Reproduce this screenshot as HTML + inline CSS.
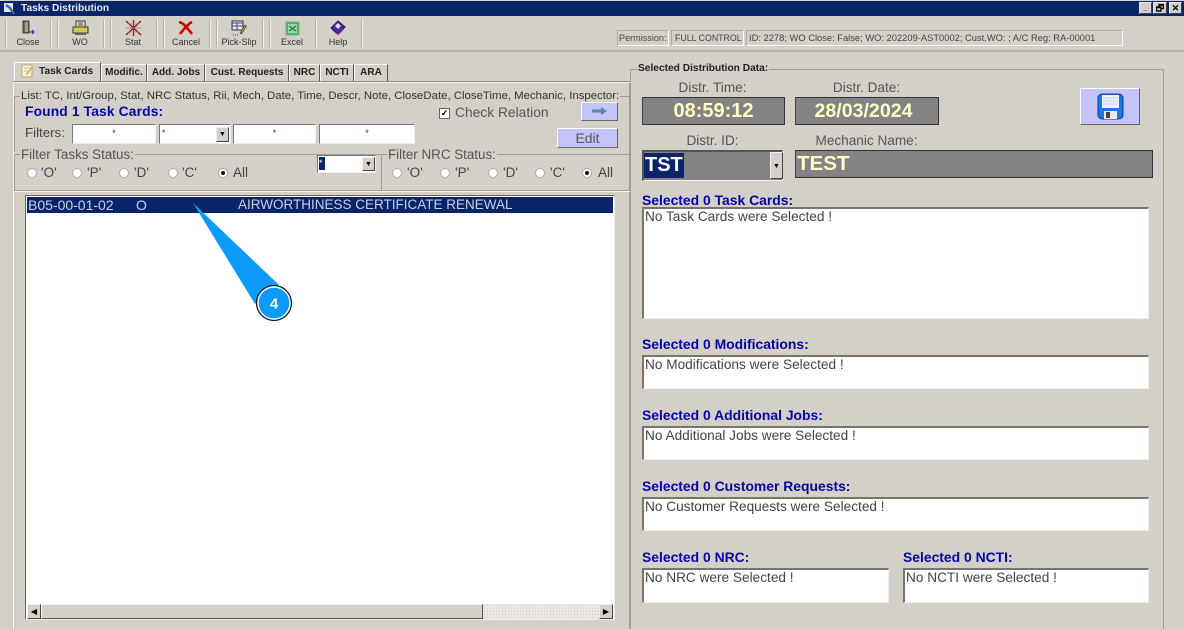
<!DOCTYPE html>
<html><head><meta charset="utf-8"><style>
html,body{margin:0;padding:0;width:1184px;height:629px;overflow:hidden;background:#d4d0c8}
body{position:relative;font-family:"Liberation Sans",sans-serif;color:#333}
div,span,svg{position:absolute;box-sizing:border-box}
.t{white-space:nowrap;line-height:14px}
.tb{font-size:9px;color:#333;text-align:center;top:36px;line-height:12px}
.sep{top:19px;width:2px;height:29px;border-left:1px solid #b5b2ab;border-right:1px solid #f2f0ec}
.tab{top:64px;height:17px;background:#d4d0c8;border-top:1px solid #fff;border-left:1px solid #fff;border-right:1px solid #555;font:bold 10px/16px "Liberation Sans",sans-serif;color:#222;text-align:center;white-space:nowrap}
.grp{border:1px solid #a09d96}
.lbl{background:#d4d0c8;padding:0 1px;white-space:nowrap;line-height:14px}
.in{background:#fff;border:1px solid #777;border-right-color:#eee;border-bottom-color:#eee}
.r{width:10px;height:10px;border-radius:50%;background:#fff;border:1px solid #aaa}
.r.on:after{content:"";position:absolute;left:2px;top:2px;width:4px;height:4px;border-radius:50%;background:#111}
.rt{font-size:13.5px;color:#444;line-height:14px;white-space:nowrap}
.blue{font:bold 13.9px/15px "Liberation Sans",sans-serif;color:#0505a8;white-space:nowrap}
.box{background:#fff;border:2px solid #77746f;border-right:1px solid #eee;border-bottom:1px solid #eee;font-size:13.65px;line-height:15px;color:#444;padding:0 0 0 1px;white-space:nowrap}
.gray{background:#848284;border:1px solid #333;border-left-color:#444;color:#ffffc4;font-weight:bold;text-align:center}
.cap{font-size:13.6px;color:#555;line-height:15px;text-align:center;white-space:nowrap}
.btn{background:#c4c4fa;border:1px solid;border-color:#fff #666 #666 #fff;text-align:center}
.arrow{background:#d4d0c8;border:1px solid;border-color:#eee #444 #444 #eee;font:7px/11px "Liberation Sans",sans-serif;color:#000;text-align:center}
</style></head><body>

<!-- title bar -->
<div style="left:0;top:1px;width:1184px;height:15px;background:#0a246a"></div>
<svg style="left:3px;top:2px" width="13" height="13" viewBox="0 0 13 13"><rect x="1" y="1" width="9" height="9" fill="#dfe7f2"/><path d="M3 3l4 3 4 6" stroke="#3a6ea5" stroke-width="2.4" fill="none"/></svg>
<div class="t" style="left:21px;top:2px;font-size:10.2px;font-weight:bold;color:#e8e8f0">Tasks Distribution</div>
<div class="arrow" style="left:1139px;top:2px;width:13px;height:12px;font-weight:bold">_</div>
<div class="arrow" style="left:1153px;top:2px;width:14px;height:12px;font-weight:bold;font-size:9px">&#x1F5D7;</div>
<div class="arrow" style="left:1169px;top:2px;width:13px;height:12px;font-weight:bold;font-size:9px">✕</div>

<!-- toolbar -->
<div class="sep" style="left:5px"></div>
<div class="sep" style="left:50px"></div><div class="sep" style="left:57px"></div>
<div class="sep" style="left:103px"></div><div class="sep" style="left:110px"></div>
<div class="sep" style="left:156px"></div><div class="sep" style="left:163px"></div>
<div class="sep" style="left:209px"></div><div class="sep" style="left:216px"></div>
<div class="sep" style="left:262px"></div><div class="sep" style="left:269px"></div>
<div class="sep" style="left:315px"></div><div class="sep" style="left:361px"></div>
<div style="left:0;top:50px;width:1184px;height:2px;background:#b5b2ab"></div>

<svg style="left:20px;top:20px" width="16" height="16" viewBox="0 0 16 16"><path d="M3 1h6v12H3z" fill="#6d6a55" stroke="#222" stroke-width=".8"/><path d="M5 2h3v10H5z" fill="#a6a37c"/><path d="M9 12h5M12 10l2 2-2 2" stroke="#2233aa" stroke-width="1" fill="none"/></svg>
<div class="tb" style="left:8px;width:40px">Close</div>
<svg style="left:72px;top:20px" width="17" height="16" viewBox="0 0 17 16"><rect x="4" y="1" width="9" height="7" fill="#e8e8d0" stroke="#333"/><path d="M6 3h5M6 5h5" stroke="#444"/><rect x="1" y="7" width="15" height="6" fill="#d6c94e" stroke="#333"/><rect x="3" y="13" width="11" height="2" fill="#666"/></svg>
<div class="tb" style="left:60px;width:40px">WO</div>
<svg style="left:125px;top:20px" width="17" height="16" viewBox="0 0 17 16"><path d="M1 1l15 14M16 1L1 15M8.500 0v16" stroke="#8c1818" stroke-width="1.300"/><path d="M1 8h15" stroke="#999" stroke-width="1"/><path d="M3 4h11M3 12h11" stroke="#c77" stroke-width=".8"/></svg>
<div class="tb" style="left:113px;width:40px">Stat</div>
<svg style="left:178px;top:21px" width="16" height="14" viewBox="0 0 16 14"><path d="M1 1c5 1 8 6 13 12M14 1C10 3 6 8 2 13" stroke="#c00" stroke-width="2.600" fill="none"/></svg>
<div class="tb" style="left:166px;width:40px">Cancel</div>
<svg style="left:231px;top:20px" width="17" height="17" viewBox="0 0 17 17"><rect x="1" y="1" width="11" height="9" fill="#e4e8f4" stroke="#334"/><path d="M1 3h11M6 3v7M1 6h11" stroke="#446"/><path d="M9 13l5-8 1.500 1-5 8z" fill="#b8a030" stroke="#222" stroke-width=".6"/><path d="M2 15h6" stroke="#333" stroke-dasharray="1 1"/></svg>
<div class="tb" style="left:219px;width:40px">Pick-Slip</div>
<svg style="left:285px;top:21px" width="15" height="15" viewBox="0 0 15 15"><rect x="1" y="1" width="13" height="13" fill="#5aa870" stroke="#6b8"/><rect x="3" y="3" width="9" height="9" fill="#9ed8a8"/><path d="M4 5l7 5M11 5l-7 5" stroke="#277a44" stroke-width="1.300"/></svg>
<div class="tb" style="left:272px;width:40px">Excel</div>
<svg style="left:330px;top:20px" width="16" height="16" viewBox="0 0 16 16"><path d="M8 1l7 6-7 7-7-6z" fill="#4a2a9c" stroke="#201060"/><path d="M8 3l3 3-3 3-3-3z" fill="#e8d8e8"/><path d="M2 10l6 5 6-6" stroke="#c060a0" fill="none"/></svg>
<div class="tb" style="left:318px;width:40px">Help</div>

<!-- status -->
<div class="t" style="left:617px;top:30px;width:52px;height:16px;border:1px solid #aaa;border-right-color:#fff;border-bottom-color:#fff;font-size:9.1px;padding-left:1px;color:#444">Permission:</div>
<div class="t" style="left:671px;top:30px;width:73px;height:16px;border:1px solid #aaa;border-right-color:#fff;border-bottom-color:#fff;font-size:8.8px;padding-left:3px;color:#444">FULL CONTROL</div>
<div class="t" style="left:746px;top:30px;width:377px;height:16px;border:1px solid #aaa;border-right-color:#fff;border-bottom-color:#fff;font-size:9.35px;padding-left:2px;color:#444">ID: 2278; WO Close: False; WO: 202209-AST0002; Cust.WO: ; A/C Reg: RA-00001</div>

<!-- tabs -->
<div style="left:13px;top:81px;width:1px;height:548px;background:#f4f3f0"></div>
<div style="left:629px;top:81px;width:1px;height:548px;background:#a09d96"></div>
<div class="tab" style="left:14px;top:62px;width:87px;height:19px;text-align:left;padding:1px 0 0 24px;font-size:10.2px">Task Cards</div>
<svg style="left:21px;top:63px" width="13" height="15" viewBox="0 0 13 15"><rect x="1" y="2" width="10" height="12" fill="#fbf4d0" stroke="#b9a878"/><path d="M3 5h6M3 8h4" stroke="#bbb"/><path d="M5 11l6-8 1 1-6 8z" fill="#d6a838"/></svg>
<div class="tab" style="left:101px;width:46px">Modific.</div>
<div class="tab" style="left:147px;width:58px">Add. Jobs</div>
<div class="tab" style="left:205px;width:84px">Cust. Requests</div>
<div class="tab" style="left:289px;width:31px">NRC</div>
<div class="tab" style="left:320px;width:34px">NCTI</div>
<div class="tab" style="left:354px;width:34px">ARA</div>
<div style="left:13px;top:81px;width:617px;height:2px;background:#8f8c85;border-bottom:1px solid #efeeea"></div>

<!-- list group -->
<div class="grp" style="left:14px;top:96px;width:616px;height:56px;border-bottom:0"></div>
<div class="lbl" style="left:20px;top:89px;font-size:11.4px;color:#333">List: TC, Int/Group, Stat, NRC Status, Rii, Mech, Date, Time, Descr, Note, CloseDate, CloseTime, Mechanic, Inspector:</div>
<div class="blue" style="left:25px;top:104px;font-size:13.8px;letter-spacing:.15px">Found 1 Task Cards:</div>
<div class="t" style="left:25px;top:126px;font-size:13.3px;color:#444">Filters:</div>
<div class="in" style="left:72px;top:124px;width:84px;height:20px;text-align:center;font-size:9px;color:#229;line-height:16px">*</div>
<div class="in" style="left:159px;top:124px;width:72px;height:20px;font-size:9px;color:#229;line-height:16px;padding-left:2px">*</div>
<div class="arrow" style="left:216px;top:127px;width:13px;height:15px;line-height:14px">▼</div>
<div class="in" style="left:233px;top:124px;width:83px;height:20px;text-align:center;font-size:9px;color:#229;line-height:16px">*</div>
<div class="in" style="left:319px;top:124px;width:96px;height:20px;text-align:center;font-size:9px;color:#229;line-height:16px">*</div>
<div class="in" style="left:439px;top:108px;width:11px;height:11px;border:1px solid #666;font:bold 9px/9px 'Liberation Sans',sans-serif;color:#000;text-align:center">✓</div>
<div class="t" style="left:455px;top:106px;font-size:13.8px;color:#555">Check Relation</div>
<div class="btn" style="left:581px;top:102px;width:37px;height:19px"></div>
<svg style="left:591px;top:106px" width="17" height="10" viewBox="0 0 17 10"><path d="M1 3.500h9V1l6 4-6 4V6.500H1z" fill="#5f86a8"/></svg>
<div class="btn" style="left:557px;top:128px;width:61px;height:20px;font-size:14px;line-height:18px;color:#555">Edit</div>

<!-- filter groups -->
<div class="grp" style="left:14px;top:154px;width:367px;height:36px;border-bottom:0;border-right:0"></div>
<div class="lbl" style="left:20px;top:148px;font-size:13.4px;color:#555">Filter Tasks Status:</div>
<div class="grp" style="left:381px;top:154px;width:249px;height:36px;border-bottom:0;border-right:0"></div>
<div class="lbl" style="left:387px;top:148px;font-size:13.4px;color:#555">Filter NRC Status:</div>
<div style="left:14px;top:190px;width:616px;height:2px;border-top:1px solid #a09d96;border-bottom:1px solid #f4f3f0"></div>

<div class="r" style="left:27px;top:168px"></div><div class="rt" style="left:41px;top:166px">'O'</div>
<div class="r" style="left:72px;top:168px"></div><div class="rt" style="left:87px;top:166px">'P'</div>
<div class="r" style="left:119px;top:168px"></div><div class="rt" style="left:134px;top:166px">'D'</div>
<div class="r" style="left:168px;top:168px"></div><div class="rt" style="left:182px;top:166px">'C'</div>
<div class="r on" style="left:218px;top:168px"></div><div class="rt" style="left:233px;top:166px">All</div>

<div class="r" style="left:392px;top:168px"></div><div class="rt" style="left:407px;top:166px">'O'</div>
<div class="r" style="left:440px;top:168px"></div><div class="rt" style="left:455px;top:166px">'P'</div>
<div class="r" style="left:488px;top:168px"></div><div class="rt" style="left:503px;top:166px">'D'</div>
<div class="r" style="left:535px;top:168px"></div><div class="rt" style="left:550px;top:166px">'C'</div>
<div class="r on" style="left:582px;top:168px"></div><div class="rt" style="left:598px;top:166px">All</div>

<div class="in" style="left:317px;top:155px;width:59px;height:18px"></div>
<div style="left:319px;top:157px;width:6px;height:13px;background:#0a246a;color:#fff;font-size:9px;line-height:13px">*</div>
<div class="arrow" style="left:362px;top:157px;width:13px;height:14px;line-height:13px">▼</div>

<!-- list -->
<div style="left:25px;top:195px;width:590px;height:425px;background:#fff;border:1px solid #666;border-right-color:#eee;border-bottom-color:#eee"></div>
<div style="left:27px;top:197px;width:586px;height:16px;background:#0a246a"></div>
<div class="t" style="left:28px;top:198px;font-size:14px;color:#c8d0e4">B05-00-01-02</div>
<div class="t" style="left:136px;top:198px;font-size:14px;color:#c8d0e4">O</div>
<div class="t" style="left:238px;top:198px;font-size:13.5px;color:#c8d0e4">AIRWORTHINESS CERTIFICATE RENEWAL</div>

<!-- scrollbar -->
<div style="left:27px;top:604px;width:586px;height:15px;background-color:#eceae6;background-image:radial-gradient(#d4d0c8 35%,transparent 40%);background-size:3px 3px"></div>
<div style="left:41px;top:604px;width:442px;height:15px;background:#d4d0c8;border:1px solid;border-color:#f4f4f4 #555 #555 #f4f4f4"></div>
<div class="arrow" style="left:27px;top:604px;width:14px;height:15px;font-size:8px;line-height:13px">◀</div>
<div class="arrow" style="left:599px;top:604px;width:14px;height:15px;font-size:8px;line-height:13px">▶</div>

<!-- callout -->
<svg style="left:190px;top:200px" width="110" height="130" viewBox="0 0 110 130"><path d="M3 3L89 85L65 104Z" fill="#0d9bfb"/><circle cx="84" cy="103" r="17.500" fill="#0d9bfb" stroke="#1a1a1a" stroke-width="1.200"/><circle cx="84" cy="103" r="16" fill="#0d9bfb" stroke="#fff" stroke-width="1.400"/><text x="84" y="108.500" text-anchor="middle" font-family="Liberation Sans" font-size="15" font-weight="bold" fill="#fff">4</text></svg>

<!-- right panel -->
<div class="grp" style="left:630px;top:69px;width:534px;height:562px"></div>
<div class="lbl" style="left:637px;top:62px;font-size:10.2px;font-weight:bold;color:#222">Selected Distribution Data:</div>

<div class="cap" style="left:642px;top:80px;width:141px">Distr. Time:</div>
<div class="cap" style="left:795px;top:80px;width:143px">Distr. Date:</div>
<div class="gray" style="left:642px;top:97px;width:143px;height:28px;font-size:20px;line-height:27px">08:59:12</div>
<div class="gray" style="left:795px;top:97px;width:144px;height:28px;font-size:19.6px;line-height:27px;padding-right:7px">28/03/2024</div>
<div class="btn" style="left:1080px;top:88px;width:60px;height:37px"></div>
<svg style="left:1097px;top:93px" width="27" height="27" viewBox="0 0 27 27"><rect x="1" y="1" width="25" height="25" rx="4" fill="#1a78e0" stroke="#0c3e90"/><rect x="5" y="2" width="17" height="13" fill="#eef2f6"/><path d="M6 5h15M6 8h15M6 11h15" stroke="#c8d0dc"/><rect x="7" y="18" width="13" height="8" fill="#e8ecf0"/><rect x="9" y="19" width="4" height="6" fill="#444"/></svg>

<div class="cap" style="left:642px;top:133px;width:141px">Distr. ID:</div>
<div class="cap" style="left:795px;top:133px;width:143px">Mechanic Name:</div>
<div style="left:642px;top:150px;width:141px;height:31px;background:#848284;border:2px solid #555;border-right:1px solid #eee;border-bottom:1px solid #eee"></div>
<div style="left:644px;top:153px;width:40px;height:25px;background:#0a246a;color:#fff;font:bold 20px/25px 'Liberation Sans',sans-serif;padding-left:1px">TST</div>
<div class="arrow" style="left:770px;top:152px;width:13px;height:27px;line-height:27px">▼</div>
<div class="gray" style="left:795px;top:150px;width:358px;height:28px;font-size:20.5px;line-height:25px;text-align:left;padding-left:1px">TEST</div>

<div class="blue" style="left:642px;top:193px">Selected 0 Task Cards:</div>
<div class="box" style="left:642px;top:207px;width:507px;height:112px">No Task Cards were Selected !</div>
<div class="blue" style="left:642px;top:337px">Selected 0 Modifications:</div>
<div class="box" style="left:642px;top:355px;width:507px;height:34px">No Modifications were Selected !</div>
<div class="blue" style="left:642px;top:408px">Selected 0 Additional Jobs:</div>
<div class="box" style="left:642px;top:426px;width:507px;height:34px">No Additional Jobs were Selected !</div>
<div class="blue" style="left:642px;top:479px">Selected 0 Customer Requests:</div>
<div class="box" style="left:642px;top:497px;width:507px;height:34px">No Customer Requests were Selected !</div>
<div class="blue" style="left:642px;top:550px">Selected 0 NRC:</div>
<div class="box" style="left:642px;top:568px;width:247px;height:35px">No NRC were Selected !</div>
<div class="blue" style="left:903px;top:550px">Selected 0 NCTI:</div>
<div class="box" style="left:903px;top:568px;width:246px;height:35px">No NCTI were Selected !</div>

</body></html>
